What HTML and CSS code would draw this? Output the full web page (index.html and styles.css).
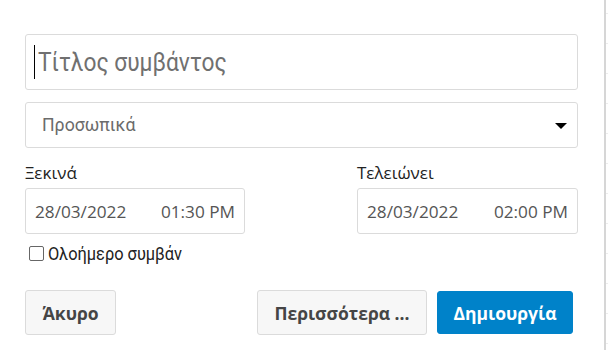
FILE: index.html
```html
<!DOCTYPE html>
<html lang="el">
<head>
<meta charset="utf-8">
<title>Νέο συμβάν</title>
<link rel="stylesheet" href="styles.css">
</head>
<body>
<div class="page">
  <div class="popover">
    <div class="field title-field">
      <span class="caret"></span>
      <span class="title-text">Τίτλος συμβάντος</span>
    </div>
    <div class="field select-field">
      <span class="select-text">Προσωπικά</span>
      <span class="arrow"></span>
    </div>
    <div class="dates">
      <div class="date-col">
        <div class="label">Ξεκινά</div>
        <div class="field date-field"><span>28/03/2022</span><span>01:30 PM</span></div>
      </div>
      <div class="date-col">
        <div class="label">Τελειώνει</div>
        <div class="field date-field"><span>28/03/2022</span><span>02:00 PM</span></div>
      </div>
    </div>
    <label class="allday">
      <span class="checkbox"></span>
      <span class="allday-text">Ολοήμερο συμβάν</span>
    </label>
    <div class="actions">
      <button class="btn btn-cancel">Άκυρο</button>
      <div class="actions-right">
        <button class="btn btn-more">Περισσότερα ...</button>
        <button class="btn btn-primary">Δημιουργία</button>
      </div>
    </div>
  </div>
  <div class="divider"></div>
  <div class="calendar"></div>
</div>
</body>
</html>
```
FILE: styles.css
```css
* { box-sizing: border-box; }
html, body { margin: 0; padding: 0; background: #fff; }
body { width: 608px; height: 356px; overflow: hidden; font-family: "Open Sans", "Noto Sans", sans-serif; }

.page { display: flex; height: 356px; }

.popover {
  width: 604px;
  padding: 34px 26px 0 25px;
  display: flex;
  flex-direction: column;
}

.field {
  border: 1px solid #dbdbdb;
  border-radius: 3px;
  background: #fff;
  display: flex;
  align-items: center;
}

.title-field { height: 56px; padding-left: 8px; }
.caret { width: 1px; height: 34px; background: #000; }
.title-text {
  display: inline-block;
  margin-left: 3px;
  font-family: Roboto, sans-serif;
  font-size: 25px;
  color: #707070;
  transform: scaleX(0.91);
  transform-origin: left center;
  white-space: nowrap;
}

.select-field {
  margin-top: 12px;
  height: 46px;
  padding: 0 10px 0 16px;
  justify-content: space-between;
}
.select-text { font-family: Roboto, sans-serif; font-size: 17.7px; color: #6b6b6b; }
.arrow {
  width: 0; height: 0;
  border-left: 6px solid transparent;
  border-right: 6px solid transparent;
  border-top: 6px solid #000;
  margin-top: 1px;
}

.dates {
  margin-top: 13px;
  display: grid;
  grid-template-columns: 220px 221px;
  justify-content: space-between;
}
.label { font-size: 17px; line-height: 23px; color: #222; margin-bottom: 4px; }
.date-field {
  height: 46px;
  padding: 0 9px;
  justify-content: space-between;
  font-size: 17.2px;
  color: #555;
}

.allday {
  margin-top: 11px;
  margin-left: 4px;
  display: flex;
  align-items: center;
  height: 16px;
}
.checkbox {
  width: 15px; height: 15px;
  border: 1px solid #666;
  border-radius: 2px;
  background: #fff;
}
.allday-text {
  display: inline-block;
  margin-left: 4px;
  font-family: Roboto, sans-serif;
  font-size: 18px;
  color: #222;
  transform: scaleX(0.91);
  transform-origin: left center;
  white-space: nowrap;
}

.actions {
  margin-top: 29px;
  margin-right: 5px;
  display: flex;
  justify-content: space-between;
  align-items: center;
}
.actions-right { display: flex; align-items: center; gap: 10px; }
.btn {
  font-family: "Open Sans", sans-serif;
  font-weight: 700;
  font-size: 17.5px;
  border-radius: 3px;
  cursor: pointer;
  margin: 0;
}
.btn-cancel, .btn-more {
  height: 45px;
  background: #f7f7f7;
  border: 1px solid #dbdbdb;
  color: #454545;
}
.btn-cancel { width: 91px; padding: 0; }
.btn-more { width: 170px; padding: 0; }
.btn-primary {
  height: 43px;
  width: 136px;
  padding: 0;
  background: #0082c9;
  border: 1px solid #0082c9;
  color: #fff;
}

.divider { width: 2px; height: 350px; background: #d6d6d6; }
.calendar {
  flex: 1;
  height: 350px;
  background: repeating-linear-gradient(to bottom, #fff 0, #fff 13px, #ececec 13px, #ececec 14px, #fff 14px, #fff 30px);
}
```
